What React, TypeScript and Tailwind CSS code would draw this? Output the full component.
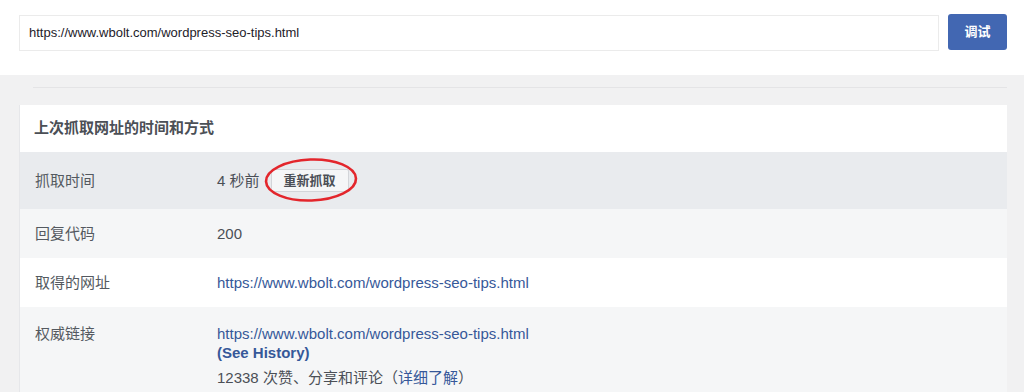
const font = { fontFamily: '"Liberation Sans", Arial, "Noto Sans CJK SC", sans-serif' };

const url = "https://www.wbolt.com/wordpress-seo-tips.html";

function Row({ label, bg, className, children }: { label: string; bg: string; className?: string; children: React.ReactNode }) {
  return (
    <div className={`flex ${bg} ${className ?? "py-[15px]"}`}>
      <div className="w-[197px] shrink-0 pl-[15px] text-[15px] leading-[19px] text-[#545960]">{label}</div>
      <div className="text-[15px] leading-[19px] text-[#4b4f56]">{children}</div>
    </div>
  );
}

export default function App() {
  return (
    <div className="w-[1024px] h-[392px] overflow-hidden bg-[#f1f1f2]" style={font}>
      <div className="h-[75px] bg-white flex items-start gap-[9px] pl-[19px] pr-[17px] pt-[14px]">
        <div className="flex-1 h-[36px] mt-[1px] border border-[#ebebeb] bg-white flex items-center pl-[9px] text-[13px] text-[#1d2129]">
          {url}
        </div>
        <button className="w-[59px] h-[36px] rounded-[3px] bg-[#4267b2] text-white text-[13px] font-bold">调试</button>
      </div>

      <div className="pl-[19px] pr-[17px]">
        <div className="mt-[12px] ml-[14px] border-t border-[#e4e4e6]" />
        <div className="mt-[17px] bg-white border-l border-[#e6e7ea]">
          <div className="h-[47px] flex items-center pl-[14px] text-[15px] font-bold text-[#4b4f56]">
            上次抓取网址的时间和方式
          </div>
          <Row label="抓取时间" bg="bg-[#e9ebee]" className="h-[57px] items-center">
            <div className="flex items-center">
              <span>4 秒前</span>
              <div className="relative ml-[11px]">
                <button className="h-[23px] px-[12px] rounded-[2px] border border-[#d3d5d9] bg-[#f5f6f7] text-[13px] leading-[21px] font-bold text-[#4b4f56]">
                  重新抓取
                </button>
                <svg className="absolute left-[-8px] top-[-12px] pointer-events-none" width="96" height="48" viewBox="0 0 96 48">
                  <ellipse cx="48" cy="23" rx="45" ry="20.5" fill="none" stroke="#e3262c" strokeWidth="2.6" transform="rotate(-2 48 23)" />
                </svg>
              </div>
            </div>
          </Row>
          <Row label="回复代码" bg="bg-[#f5f6f7]">200</Row>
          <Row label="取得的网址" bg="bg-white">
            <span className="text-[#365899]">{url}</span>
          </Row>
          <Row label="权威链接" bg="bg-[#f5f6f7]" className="pt-[17px] pb-[20px]">
            <div className="text-[#365899]">{url}</div>
            <div className="text-[#365899] font-bold">(See History)</div>
            <div className="mt-[6px]">
              12338 次赞、分享和评论（<span className="text-[#365899]">详细了解</span>）
            </div>
          </Row>
        </div>
      </div>
    </div>
  );
}
